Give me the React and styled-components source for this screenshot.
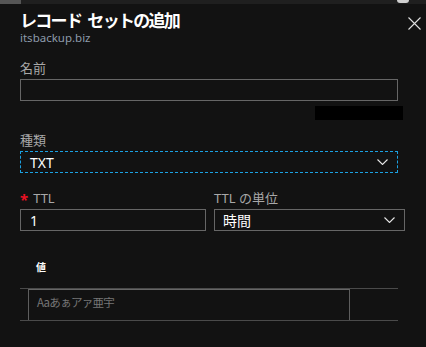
import styled, { createGlobalStyle } from "styled-components";

const Global = createGlobalStyle`
  html, body {
    margin: 0;
    padding: 0;
    background: #121212;
  }
  body {
    font-family: "Noto Sans", "Noto Sans CJK JP", sans-serif;
    color: #e6e6e6;
  }
`;

const Page = styled.div`
  width: 426px;
  height: 347px;
  background: #121212;
  overflow: hidden;
`;

const TopStrip = styled.div`
  height: 4px;
  background: #1f1f1f;
  display: flex;
  justify-content: space-between;
`;

const StripTab = styled.div`
  width: 21px;
  background: #555555;
`;

const StripDot = styled.div`
  width: 12px;
  height: 3px;
  margin-right: 17px;
  border-radius: 0 0 6px 6px;
  background: #cfcfcf;
`;

const Body = styled.div`
  padding: 0 28px 0 20px;
  display: flex;
  flex-direction: column;
`;

const Header = styled.div`
  display: flex;
  justify-content: space-between;
  align-items: flex-start;
  padding-top: 6px;
`;

const Titles = styled.div`
  display: flex;
  flex-direction: column;
  gap: 2px;
`;

const Title = styled.h1`
  margin: 0;
  font-family: "Noto Sans CJK JP", sans-serif;
  font-size: 17px;
  font-weight: 700;
  line-height: 19px;
  height: 19px;
  color: #ffffff;
  letter-spacing: -1.7px;
  word-spacing: 4px;
`;

const Subtitle = styled.div`
  font-family: "Noto Sans", "Open Sans", sans-serif;
  font-size: 11.5px;
  line-height: 14px;
  height: 14px;
  color: #8d9bab;
`;

const Close = styled.button`
  background: none;
  border: none;
  padding: 0;
  margin: 7px -23px 0 0;
  width: 13px;
  height: 13px;
  display: flex;
  cursor: pointer;
`;

const Field = styled.div`
  display: flex;
  flex-direction: column;
  margin-top: ${(p) => p.$top || 0}px;
  width: ${(p) => (p.$w ? `${p.$w}px` : "auto")};
  flex: ${(p) => (p.$grow ? 1 : "none")};
`;

const Label = styled.label`
  font-family: "Noto Sans", "Noto Sans CJK JP", sans-serif;
  font-size: 13px;
  line-height: 16px;
  color: #a8a8a8;
  height: 16px;
  margin-bottom: 3px;
  display: flex;
  align-items: center;
  gap: 5px;
`;

const Star = styled.span`
  color: #e81123;
  font-size: 15px;
  line-height: 15px;
  font-weight: 700;
  margin-top: 3px;
`;

const Box = styled.div`
  height: 22px;
  box-sizing: border-box;
  border: 1px ${(p) => (p.$focus ? "dashed #1ba1e2" : "solid #666666")};
  display: flex;
  align-items: center;
  justify-content: space-between;
  padding: 0 9px 0 ${(p) => p.$pl || 9}px;
  font-family: "Noto Sans", "Noto Sans CJK JP", sans-serif;
  font-size: 14px;
  color: #ffffff;
`;

const Redact = styled.div`
  align-self: flex-end;
  width: 88px;
  height: 14px;
  background: #000000;
  margin: 5px -5px 0 0;
`;

const Row = styled.div`
  display: flex;
  gap: 8px;
  margin-top: 17px;
  margin-right: -7px;
`;

const TableHead = styled.div`
  margin-top: 30px;
  padding-left: 16px;
  font-family: "Noto Sans CJK JP", sans-serif;
  font-size: 10px;
  line-height: 12px;
  font-weight: 700;
  color: #ffffff;
  height: 12px;
`;

const TableRow = styled.div`
  margin-top: 15px;
  height: 33px;
  box-sizing: border-box;
  border-top: 1px solid #4a4a4a;
  border-bottom: 1px solid #4a4a4a;
  padding-left: 8px;
  display: flex;
`;

const CellInput = styled.div`
  width: 322px;
  box-sizing: border-box;
  border: 1px solid #5e5e5e;
  border-top-color: #666666;
  border-bottom: none;
  padding: 4px 8px;
  font-family: "Noto Sans CJK JP", sans-serif;
  font-size: 11.5px;
  line-height: 16px;
  letter-spacing: -0.7px;
  color: #767676;
`;

const Chevron = () => (
  <svg width="11" height="6" viewBox="0 0 11 6">
    <path d="M0.5 0.5 L5.5 5.5 L10.5 0.5" fill="none" stroke="#e6e6e6" strokeWidth="1.1" />
  </svg>
);

export default function App() {
  return (
    <Page>
      <Global />
      <TopStrip>
        <StripTab />
        <StripDot />
      </TopStrip>
      <Body>
        <Header>
          <Titles>
            <Title>レコード セットの追加</Title>
            <Subtitle>itsbackup.biz</Subtitle>
          </Titles>
          <Close aria-label="閉じる">
            <svg width="13" height="13" viewBox="0 0 13 13">
              <path d="M0.5 0.5 L12.5 12.5 M12.5 0.5 L0.5 12.5" stroke="#e0e0e0" strokeWidth="1.1" />
            </svg>
          </Close>
        </Header>

        <Field $top={15}>
          <Label>名前</Label>
          <Box />
          <Redact />
        </Field>

        <Field $top={12}>
          <Label>種類</Label>
          <Box $focus>
            <span>TXT</span>
            <Chevron />
          </Box>
        </Field>

        <Row>
          <Field $w={186}>
            <Label>
              <Star>*</Star>TTL
            </Label>
            <Box>1</Box>
          </Field>
          <Field $grow>
            <Label>TTL の単位</Label>
            <Box $pl={8}>
              <span>時間</span>
              <Chevron />
            </Box>
          </Field>
        </Row>

        <TableHead>値</TableHead>
        <TableRow>
          <CellInput>Aaあぁアァ亜宇</CellInput>
        </TableRow>
      </Body>
    </Page>
  );
}
